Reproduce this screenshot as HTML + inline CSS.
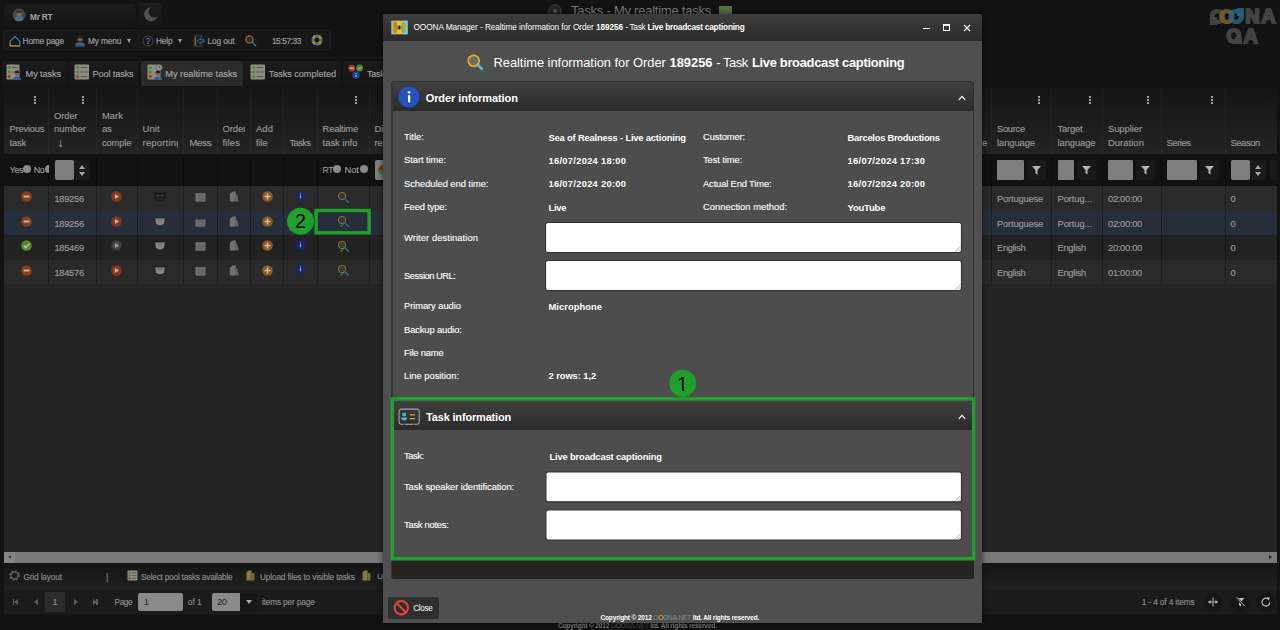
<!DOCTYPE html>
<html lang="en">
<head>
<meta charset="utf-8">
<title>OOONA Manager - Realtime information</title>
<style>
html,body{margin:0;padding:0}
body{width:1280px;height:630px;overflow:hidden;position:relative;background:#121212;font-family:"Liberation Sans",sans-serif;font-size:9px;color:#8f8f8f}
.a{position:absolute;white-space:nowrap}
.t{position:absolute;white-space:nowrap;line-height:12px;height:12px}
.b{font-weight:bold}
.lg{font-weight:bold;line-height:22px;font-family:"Liberation Sans",sans-serif}
#userbox{left:4px;top:4px;width:132px;height:22px;background:linear-gradient(#1c1c1c,#141414);border-radius:5px}
#moonbox{left:139px;top:3px;width:23px;height:22px;background:linear-gradient(#1c1c1c,#161616);border-radius:3px}
#menubar{left:3px;top:30px;width:328px;height:20px;background:#171717;box-shadow:inset 0 0 0 1px #1f1f1f;border-radius:2px}
.m{font-size:8.300px;color:#9c9c9c;top:35px;-webkit-text-stroke:.2px #9c9c9c}
.tab{top:61px;height:24.500px;background:linear-gradient(#1b1b1b,#151515);border-radius:2px}
.tab.sel{background:linear-gradient(#2c2c2c,#292929)}
.tt{font-size:9.250px;color:#9c9c9c;top:67.500px;-webkit-text-stroke:.2px #9c9c9c}
#ghead{left:4px;top:87px;width:1273px;height:67px;background:linear-gradient(#141414,#232323)}
#gfilt{left:4px;top:154px;width:1273px;height:32px;background:#111111}
.row{left:4px;width:1273px;height:24.600px}
.sep{top:87px;width:1px;height:198px;background:rgba(255,255,255,0.035)}
.gh{color:#9a9a9a;font-size:9.400px;-webkit-text-stroke:.15px #9a9a9a}
.gc{color:#9a9a9a;font-size:9.400px;-webkit-text-stroke:.15px #9a9a9a}
.dots{width:2px;height:2px;background:#a0a0a0;box-shadow:0 3px 0 #a0a0a0,0 -3px 0 #a0a0a0;top:99px}
.fin{background:#7f7f7f;top:160px;height:20px;border-radius:1px}
.fbtn{background:#191919;top:160px;height:20px;width:19px;border-radius:2px}
.rad{width:8px;height:8px;border-radius:50%;background:#8a8a8a;top:165px}
.bt{font-size:8.300px;color:#8c8c8c;-webkit-text-stroke:.15px #8c8c8c}
#dlg{left:383px;top:14px;width:599px;height:609px;background:#4f4f4f;border-radius:3px 3px 0 0;box-shadow:0 0 6px rgba(0,0,0,.6)}
#dtitle{left:0;top:0;width:599px;height:27px;background:linear-gradient(#3d3d3d,#2b2b2b);border-radius:3px 3px 0 0}
.ph{background:linear-gradient(#404040,#2a2a2a)}
.lbl{color:#fff;font-size:9.400px;-webkit-text-stroke:.12px #fff}
.val{color:#fff;font-size:9.400px;font-weight:bold}
.ta{background:#fff;border:1px solid #2b2b2b;border-radius:2.500px;box-sizing:border-box}
.green{border:3.400px solid #1fa02d;box-sizing:border-box}
.gcirc{width:26px;height:26px;border-radius:50%;background:#1fa02d;color:#000;font-size:18px;line-height:26px;text-align:center}
</style>
</head>
<body>
<!-- background page (dimmed by modal overlay) -->
<div class="a" id="userbox"></div><div class="a" id="moonbox"></div><div class="a" id="menubar"></div>
<svg class="a" style="left:12px;top:8px" width="14" height="14" viewBox="0 0 14 14"><circle cx="7" cy="7" r="6.500" fill="#484848"/><circle cx="7" cy="6.200" r="2.600" fill="#7d6a4a"/><path d="M2.500 11.500a4.500 3.600 0 0 1 9 0a6.500 6.500 0 0 1-9 0z" fill="#3f6f8a"/><rect x="4.300" y="3.200" width="5.400" height="1.600" fill="#2a2a2a"/></svg>
<div class="t b" style="left:30px;top:11px;color:#a5a5a5;font-size:8.3px;letter-spacing:-0.223px">Mr RT</div>
<svg class="a" style="left:143px;top:6px" width="16" height="16" viewBox="0 0 16 16"><path d="M8.200 1.200a7 7 0 1 0 6.600 9.300a5.600 5.600 0 0 1-6.600-9.300z" fill="#505050"/></svg>
<svg class="a" style="left:9px;top:35px" width="12" height="12" viewBox="0 0 12 12"><path d="M1.200 6.200L6 1.400l4.800 4.800v4.600H1.200z" fill="none" stroke="#3f6f9a" stroke-width="1.400"/><path d="M1.200 8.200v2.600h9.600" fill="none" stroke="#9a7d1e" stroke-width="1.500"/></svg>
<div class="t m" style="left:22.6px;font-size:8.3px;letter-spacing:-0.167px">Home page</div>
<svg class="a" style="left:74px;top:35px" width="12" height="12" viewBox="0 0 12 12"><circle cx="6" cy="4" r="2.500" fill="#8a5e3c"/><path d="M3.400 3.600a2.600 2.600 0 0 1 5.200 0z" fill="#222"/><path d="M1 11.500a5 4.600 0 0 1 10 0z" fill="#2f5f8f"/></svg>
<div class="t m" style="left:88px;font-size:8.3px;letter-spacing:-0.132px">My menu</div>
<div class="a" style="left:127px;top:39.300px;border-left:2.800px solid transparent;border-right:2.800px solid transparent;border-top:4.400px solid #a0a0a0"></div>
<svg class="a" style="left:142px;top:35px" width="12" height="12" viewBox="0 0 12 12"><circle cx="6" cy="6" r="5" fill="none" stroke="#4a4a50" stroke-width=".9"/><text x="6" y="8.800" font-size="8.500" text-anchor="middle" fill="#4f7fb8" style="font-family:&quot;Liberation Sans&quot;,sans-serif">?</text><circle cx="6" cy="8.300" r=".7" fill="#b07a2a"/></svg>
<div class="t m" style="left:156px;font-size:8.3px;letter-spacing:-0.17px">Help</div>
<div class="a" style="left:178px;top:39.300px;border-left:2.800px solid transparent;border-right:2.800px solid transparent;border-top:4.400px solid #a0a0a0"></div>
<svg class="a" style="left:193px;top:35px" width="12" height="12" viewBox="0 0 12 12"><path d="M8.500 3V.8H1.300v10.400h7.200V9" fill="none" stroke="#4c4c4c" stroke-width=".9"/><path d="M2.600 1.500v9" stroke="#8a6a22" stroke-width="1.100"/><path d="M4.300 6l3.200-2.700v1.500h3.600v2.400H7.500v1.500z" fill="#1a1a1a" stroke="#3f78a8" stroke-width=".9"/></svg>
<div class="t m" style="left:207.4px;font-size:8.3px;letter-spacing:-0.098px">Log out</div>
<svg class="a" style="left:244px;top:34px" width="14" height="14" viewBox="0 0 14 14"><circle cx="5.400" cy="5.400" r="3.600" fill="#2a2a2a" stroke="#9a7a20" stroke-width="1.200"/><path d="M8.300 8.300l3.300 3.300" stroke="#35708f" stroke-width="1.600" stroke-linecap="round"/></svg>
<div class="t m" style="left:271.9px;font-size:8.3px;letter-spacing:-0.4px">15:57:33</div>
<svg class="a" style="left:311px;top:34px" width="12" height="12" viewBox="0 0 12 12"><circle cx="6" cy="6" r="4" fill="none" stroke="#3f6f9a" stroke-width="3"/><circle cx="6" cy="6" r="4" fill="none" stroke="#a8851c" stroke-width="3" stroke-dasharray="3.140 3.140" transform="rotate(20 6 6)"/></svg>
<div class="a tab" style="left:2px;width:65px"></div>
<div class="a tab" style="left:68px;width:71px"></div>
<div class="a tab sel" style="left:141px;width:102px"></div>
<div class="a tab" style="left:244px;width:97px"></div>
<div class="a tab" style="left:343px;width:45px"></div>
<svg class="a" style="left:6px;top:63.500px" width="16" height="16" viewBox="0 0 16 16"><rect x=".5" y=".5" width="13" height="15" rx="1" fill="#8d8d85"/><circle cx="3.300" cy="3.500" r="1.600" fill="#4f8a2a"/><circle cx="3.300" cy="8" r="1.600" fill="#4f8a2a"/><circle cx="3.300" cy="12.500" r="1.600" fill="#a63a1e"/><path d="M6 3.500h6M6 8h3" stroke="#555" stroke-width="1"/><circle cx="11" cy="9.600" r="2.400" fill="#8a5e3c"/><path d="M8.600 9a2.400 2.400 0 0 1 4.800 0z" fill="#222"/><path d="M7 16a4 3.600 0 0 1 8 0z" fill="#2f5f9f"/></svg>
<div class="t tt" style="left:25.6px;font-size:9.25px;letter-spacing:-0.138px">My tasks</div>
<svg class="a" style="left:74px;top:63.500px" width="16" height="16" viewBox="0 0 16 16"><rect x=".5" y=".5" width="14.500" height="15" rx="1" fill="#8d8d85"/><circle cx="3.500" cy="3.500" r="1.600" fill="#4f8a2a"/><circle cx="3.500" cy="8" r="1.600" fill="#4f8a2a"/><circle cx="3.500" cy="12.500" r="1.600" fill="#a63a1e"/><path d="M6.500 3.500h7M6.500 8h7M6.500 12.500h7" stroke="#555" stroke-width="1"/></svg>
<div class="t tt" style="left:92.6px;font-size:9.25px;letter-spacing:-0.169px">Pool tasks</div>
<svg class="a" style="left:146.500px;top:63.500px" width="16" height="16" viewBox="0 0 16 16"><rect x=".5" y=".5" width="13" height="15" rx="1" fill="#8d8d85"/><circle cx="3.300" cy="3.500" r="1.600" fill="#4f8a2a"/><circle cx="3.300" cy="8" r="1.600" fill="#4f8a2a"/><circle cx="3.300" cy="12.500" r="1.600" fill="#a63a1e"/><circle cx="12" cy="3.600" r="3.200" fill="#999" stroke="#555" stroke-width=".7"/><path d="M12 1.800v1.900h1.500" stroke="#333" stroke-width=".7" fill="none"/><circle cx="11" cy="9.600" r="2.400" fill="#8a5e3c"/><path d="M8.600 9a2.400 2.400 0 0 1 4.800 0z" fill="#222"/><path d="M7 16a4 3.600 0 0 1 8 0z" fill="#2f5f9f"/></svg>
<div class="t tt" style="left:165.2px;color:#a4a4a4;font-size:9.25px;letter-spacing:0.002px">My realtime tasks</div>
<svg class="a" style="left:250px;top:63.500px" width="16" height="16" viewBox="0 0 16 16"><rect x=".5" y=".5" width="14.500" height="15" rx="1" fill="#8d8d85"/><circle cx="3.500" cy="3.500" r="1.600" fill="#4f8a2a"/><circle cx="3.500" cy="8" r="1.600" fill="#4f8a2a"/><circle cx="3.500" cy="12.500" r="1.600" fill="#4f8a2a"/><path d="M6.500 3.500h7M6.500 8h7M6.500 12.500h7" stroke="#555" stroke-width="1"/></svg>
<div class="t tt" style="left:268.7px;font-size:9.25px;letter-spacing:-0.107px">Tasks completed</div>
<svg class="a" style="left:348px;top:63.500px" width="17" height="16" viewBox="0 0 17 16"><circle cx="3.800" cy="4.200" r="3.400" fill="#a63a1e"/><rect x="1.800" y="3.500" width="4" height="1.400" fill="#bbb"/><circle cx="11.600" cy="4" r="3.400" fill="#4f8a2a"/><path d="M10 4l1.200 1.300L13.400 2.800" stroke="#bbb" stroke-width="1" fill="none"/><circle cx="8" cy="11" r="3.800" fill="#1f3f9f"/><rect x="7.500" y="9" width="1" height="1" fill="#ccc"/><rect x="7.500" y="10.600" width="1" height="2.600" fill="#ccc"/></svg>
<div class="t tt" style="left:367px;font-size:9.25px;letter-spacing:-0.331px">Tasks</div>
<svg class="a" style="left:548px;top:4px" width="14" height="14" viewBox="0 0 14 14"><circle cx="7" cy="7" r="6.200" fill="#222" stroke="#444" stroke-width="1"/><circle cx="7" cy="7" r="2" fill="#555"/></svg>
<div id="ptitle" class="a" style="left:571px;top:2.300px;line-height:18px;color:#7d7d7d;font-size:13px;letter-spacing:-0.237px">Tasks - My realtime tasks</div>
<svg class="a" style="left:719px;top:6px" width="13" height="8" viewBox="0 0 13 8"><rect width="13" height="8" fill="#5d6a50"/><rect x="1" y="1" width="4" height="6" fill="#467a28"/></svg>
<span class="a lg" style="left:1210.1px;top:5.7px;color:#434343;-webkit-text-stroke:2.2px #434343;font-size:18.8px;opacity:1">O</span>
<span class="a lg" style="left:1219.6px;top:5.7px;color:#7d6120;-webkit-text-stroke:2.2px #7d6120;font-size:18.8px;opacity:0.85">O</span>
<span class="a lg" style="left:1228.9px;top:5.7px;color:#2a6482;-webkit-text-stroke:2.2px #2a6482;font-size:18.8px;opacity:0.85">O</span>
<span class="a lg" style="left:1245.2px;top:4.9px;color:#434343;-webkit-text-stroke:2px #434343;font-size:20px;opacity:1">N</span>
<span class="a lg" style="left:1261.3px;top:4.9px;color:#434343;-webkit-text-stroke:2px #434343;font-size:20px;opacity:1">A</span>
<span class="a lg" style="left:1226.6px;top:25.4px;color:#434343;-webkit-text-stroke:2.2px #434343;font-size:18.8px;opacity:1">Q</span>
<span class="a lg" style="left:1243.4px;top:24.6px;color:#434343;-webkit-text-stroke:2px #434343;font-size:20px;opacity:1">A</span>
<div class="a" style="left:1210px;top:17px;width:7px;height:7.600px;background:#434343"></div><div class="a" style="left:1237px;top:8.300px;width:7px;height:8px;background:#2a6482;opacity:.85"></div><div class="a" style="left:1235px;top:36.500px;width:7px;height:7.500px;background:#434343"></div><div class="a" style="left:1224px;top:44.200px;width:22px;height:6px;background:#121212"></div>
<!-- grid -->
<div class="a" id="ghead"></div><div class="a" id="gfilt"></div>
<div class="a row" style="top:186px;background:#2a2a2a"></div>
<div class="a row" style="top:210.6px;background:#262d3b"></div>
<div class="a row" style="top:235.2px;background:#222222"></div>
<div class="a row" style="top:259.8px;background:#2a2a2a"></div>
<div class="a" style="left:4px;top:284.400px;width:1273px;height:267.600px;background:#242424"></div>
<div class="a sep" style="left:48px;height:67px"></div><div class="a sep" style="left:48px;top:154px;height:131px;background:rgba(0,0,0,.32)"></div>
<div class="a sep" style="left:96px;height:67px"></div><div class="a sep" style="left:96px;top:154px;height:131px;background:rgba(0,0,0,.32)"></div>
<div class="a sep" style="left:137px;height:67px"></div><div class="a sep" style="left:137px;top:154px;height:131px;background:rgba(0,0,0,.32)"></div>
<div class="a sep" style="left:183px;height:67px"></div><div class="a sep" style="left:183px;top:154px;height:131px;background:rgba(0,0,0,.32)"></div>
<div class="a sep" style="left:217px;height:67px"></div><div class="a sep" style="left:217px;top:154px;height:131px;background:rgba(0,0,0,.32)"></div>
<div class="a sep" style="left:250px;height:67px"></div><div class="a sep" style="left:250px;top:154px;height:131px;background:rgba(0,0,0,.32)"></div>
<div class="a sep" style="left:283px;height:67px"></div><div class="a sep" style="left:283px;top:154px;height:131px;background:rgba(0,0,0,.32)"></div>
<div class="a sep" style="left:317px;height:67px"></div><div class="a sep" style="left:317px;top:154px;height:131px;background:rgba(0,0,0,.32)"></div>
<div class="a sep" style="left:369px;height:67px"></div><div class="a sep" style="left:369px;top:154px;height:131px;background:rgba(0,0,0,.32)"></div>
<div class="a sep" style="left:991px;height:67px"></div><div class="a sep" style="left:991px;top:154px;height:131px;background:rgba(0,0,0,.32)"></div>
<div class="a sep" style="left:1051px;height:67px"></div><div class="a sep" style="left:1051px;top:154px;height:131px;background:rgba(0,0,0,.32)"></div>
<div class="a sep" style="left:1102px;height:67px"></div><div class="a sep" style="left:1102px;top:154px;height:131px;background:rgba(0,0,0,.32)"></div>
<div class="a sep" style="left:1161px;height:67px"></div><div class="a sep" style="left:1161px;top:154px;height:131px;background:rgba(0,0,0,.32)"></div>
<div class="a sep" style="left:1225px;height:67px"></div><div class="a sep" style="left:1225px;top:154px;height:131px;background:rgba(0,0,0,.32)"></div>
<div class="t gh" style="left:9.6px;top:122.6px;font-size:9.4px;letter-spacing:-0.236px">Previous</div><div class="t gh" style="left:9.6px;top:136.8px;font-size:9.4px;letter-spacing:-0.201px">task</div>
<div class="t gh" style="left:54px;top:110.0px;font-size:9.4px;letter-spacing:-0.074px">Order</div><div class="t gh" style="left:54px;top:122.6px;font-size:9.4px;letter-spacing:0.034px">number</div><div class="t gh" style="left:54px;top:136.8px;"><span style="font-size:12px;padding-left:3.200px">&#8595;</span></div>
<div class="t gh" style="left:102px;top:110.0px;width:29.5px;overflow:hidden;font-size:9.4px;letter-spacing:0.039px">Mark</div><div class="t gh" style="left:102px;top:122.6px;width:29.5px;overflow:hidden;font-size:9.4px;letter-spacing:-0.203px">as</div><div class="t gh" style="left:102px;top:136.8px;width:29.5px;overflow:hidden;font-size:9.4px;letter-spacing:-0.141px">completed</div>
<div class="t gh" style="left:142.6px;top:122.6px;width:35.5px;overflow:hidden;font-size:9.4px;letter-spacing:0.082px">Unit</div><div class="t gh" style="left:142.6px;top:136.8px;width:35.5px;overflow:hidden;font-size:9.4px;letter-spacing:0.22px">reporting</div>
<div class="t gh" style="left:189.4px;top:136.8px;width:22.5px;overflow:hidden;font-size:9.4px;letter-spacing:-0.217px">Messages</div>
<div class="t gh" style="left:222.5px;top:122.6px;width:22.7px;overflow:hidden;font-size:9.4px;letter-spacing:-0.074px">Order</div><div class="t gh" style="left:222.5px;top:136.8px;width:22.7px;overflow:hidden;font-size:9.4px;letter-spacing:0.166px">files</div>
<div class="t gh" style="left:256px;top:122.6px;font-size:9.4px;letter-spacing:0.104px">Add</div><div class="t gh" style="left:256px;top:136.8px;font-size:9.4px;letter-spacing:-0.096px">file</div>
<div class="t gh" style="left:289.4px;top:136.8px;font-size:9.2px;letter-spacing:-0.452px">Tasks</div>
<div class="t gh" style="left:322.6px;top:122.6px;font-size:9.4px;letter-spacing:-0.2px">Realtime</div><div class="t gh" style="left:322.6px;top:136.8px;font-size:9.4px;letter-spacing:-0.014px">task info</div>
<div class="t gh" style="left:374.4px;top:122.6px;width:9px;overflow:hidden;">Disc</div><div class="t gh" style="left:374.4px;top:136.8px;width:9px;overflow:hidden;">repo</div>
<div class="t gh" style="left:982px;top:136.8px;">e</div>
<div class="t gh" style="left:997px;top:122.6px;font-size:9.4px;letter-spacing:-0.32px">Source</div><div class="t gh" style="left:997px;top:136.8px;font-size:9.4px;letter-spacing:-0.074px">language</div>
<div class="t gh" style="left:1057.5px;top:122.6px;font-size:9.4px;letter-spacing:-0.194px">Target</div><div class="t gh" style="left:1057.5px;top:136.8px;font-size:9.4px;letter-spacing:-0.074px">language</div>
<div class="t gh" style="left:1108px;top:122.6px;font-size:9.4px;letter-spacing:-0.051px">Supplier</div><div class="t gh" style="left:1108px;top:136.8px;font-size:9.4px;letter-spacing:0.058px">Duration</div>
<div class="t gh" style="left:1166.5px;top:136.8px;font-size:9.4px;letter-spacing:-0.413px">Series</div>
<div class="t gh" style="left:1230.5px;top:136.8px;font-size:9.4px;letter-spacing:-0.433px">Season</div>
<div class="a dots" style="left:33.9px"></div>
<div class="a dots" style="left:82.3px"></div>
<div class="a dots" style="left:354.8px"></div>
<div class="a dots" style="left:1037.5px"></div>
<div class="a dots" style="left:1088.5px"></div>
<div class="a dots" style="left:1146.5px"></div>
<div class="a dots" style="left:1210.5px"></div>
<div class="t gc" style="left:9.6px;top:163.5px;font-size:9.13px;letter-spacing:-0.452px">Yes</div><div class="a rad" style="left:23.300px"></div><div class="t gc" style="left:33.8px;top:163.5px;font-size:8.94px;letter-spacing:-0.449px">No</div><div class="a rad" style="left:44.500px;width:4px;border-radius:4px 0 0 4px"></div>
<div class="a fin" style="left:54.600px;width:19px;border-radius:2px"></div><div class="a" style="left:73.600px;top:160px;width:16.500px;height:20px;background:#1a1a1a;border-radius:0 2px 2px 0"></div>
<div class="a" style="left:79px;top:164.500px;border-left:3px solid transparent;border-right:3px solid transparent;border-bottom:4px solid #aaa"></div><div class="a" style="left:79px;top:172px;border-left:3px solid transparent;border-right:3px solid transparent;border-top:4px solid #aaa"></div>
<div class="t gc" style="left:322.6px;top:163.5px;font-size:8.69px;letter-spacing:-0.448px">RT</div><div class="a rad" style="left:333px"></div><div class="t gc" style="left:344.4px;top:163.5px;font-size:9.4px;letter-spacing:-0.031px">Not</div><div class="a rad" style="left:360px"></div>
<div class="a" style="left:375px;top:160px;width:8px;height:20px;background:#7f7f7f;border-radius:2px 0 0 2px"></div><div class="a" style="left:378px;top:165px;width:5px;height:5px;background:#8f3526;border-radius:5px 0 0 0"></div><div class="a" style="left:378px;top:170px;width:5px;height:5px;background:#447a26;border-radius:0 0 0 5px"></div>
<div class="a fin" style="left:997px;width:26.5px"></div><div class="a fbtn" style="left:1026.5px"></div><svg class="a" style="left:1026.5px;top:161px" width="19" height="18" viewBox="0 0 19 18"><path d="M5 5h9l-3.500 4v4.500l-2-1.200V9z" fill="#b8b8b8"/></svg>
<div class="a fin" style="left:1057.5px;width:16px"></div><div class="a fbtn" style="left:1077px"></div><svg class="a" style="left:1077px;top:161px" width="19" height="18" viewBox="0 0 19 18"><path d="M5 5h9l-3.500 4v4.500l-2-1.200V9z" fill="#b8b8b8"/></svg>
<div class="a fin" style="left:1108px;width:24.5px"></div><div class="a fbtn" style="left:1136px"></div><svg class="a" style="left:1136px;top:161px" width="19" height="18" viewBox="0 0 19 18"><path d="M5 5h9l-3.500 4v4.500l-2-1.200V9z" fill="#b8b8b8"/></svg>
<div class="a fin" style="left:1167px;width:29.5px"></div><div class="a fbtn" style="left:1200px"></div><svg class="a" style="left:1200px;top:161px" width="19" height="18" viewBox="0 0 19 18"><path d="M5 5h9l-3.500 4v4.500l-2-1.200V9z" fill="#b8b8b8"/></svg>
<div class="a fin" style="left:1231px;width:18.500px;border-radius:2px"></div><div class="a" style="left:1249.500px;top:160px;width:16.500px;height:20px;background:#1a1a1a;border-radius:0 2px 2px 0"></div>
<div class="a" style="left:1255px;top:164.500px;border-left:3px solid transparent;border-right:3px solid transparent;border-bottom:4px solid #aaa"></div><div class="a" style="left:1255px;top:172px;border-left:3px solid transparent;border-right:3px solid transparent;border-top:4px solid #aaa"></div>
<div class="a fbtn" style="left:1270px;width:7px;border-radius:2px 0 0 2px"></div>
<svg class="a" style="left:20.5px;top:191.1px" width="11" height="11" viewBox="0 0 11 11"><circle cx="5.500" cy="5.500" r="5.300" fill="#8f3c19"/><rect x="2.500" y="4.500" width="6" height="2" rx=".5" fill="#b8b8b8"/></svg>
<div class="t gc" style="left:54.4px;top:192.9px;font-size:9.4px;letter-spacing:-0.316px">189256</div>
<svg class="a" style="left:111px;top:191.1px" width="11" height="11" viewBox="0 0 11 11"><circle cx="5.500" cy="5.500" r="5.300" fill="#8a3518"/><path d="M3.900 3l4.400 2.500-4.400 2.500z" fill="#b8b8b8"/></svg>
<svg class="a" style="left:154.3px;top:191.1px" width="12" height="11" viewBox="0 0 12 11"><path d="M1 1.300l1.600.7h6.800l1.600-.7v4.200a5 4.400 0 0 1-10 0z" fill="#242424" stroke="#141414" stroke-width=".8"/><path d="M3.700 4.600h1.600M6.700 4.600h1.600" stroke="#5a5a5a" stroke-width=".9"/></svg>
<svg class="a" style="left:195.3px;top:193.0px" width="11" height="9" viewBox="0 0 11 9"><rect x=".5" y=".3" width="10" height="8.400" rx="1" fill="#6e6e6e"/><rect x=".5" y=".3" width="10" height="1.200" fill="#6e6e6e"/><path d="M1.500 3.200h9M1.500 5h9M1.500 6.800h9" stroke="#5c5c5c" stroke-width=".6"/><path d="M1.800 1.500v7" stroke="#888" stroke-width=".6"/></svg>
<svg class="a" style="left:228.5px;top:191.1px" width="10" height="11" viewBox="0 0 10 11"><path d="M.8 3l3-2.500h3v10h-6z" fill="#707070"/><path d="M6.800 3.500h1.400l1.300 6v1H6.800z" fill="#666"/><path d="M3 1v9.500" stroke="#7c7c7c" stroke-width=".6"/></svg>
<svg class="a" style="left:261.5px;top:191.1px" width="11" height="11" viewBox="0 0 11 11"><circle cx="5.500" cy="5.500" r="5.300" fill="#8f5a1c"/><path d="M5.500 2.600v5.800M2.600 5.500h5.800" stroke="#c0c0c0" stroke-width="1.500"/></svg>
<svg class="a" style="left:295px;top:190.5px" width="12" height="12" viewBox="0 0 12 12"><ellipse cx="5.500" cy="5" rx="5.200" ry="4.600" fill="#13286b"/><path d="M6 8.500l3.300 3-.3-4.500z" fill="#13286b"/><rect x="5" y="2.200" width="1.100" height="1.100" fill="#a8a8a8"/><rect x="5" y="4" width="1.100" height="3.400" fill="#a8a8a8"/></svg>
<svg class="a" style="left:337px;top:190.5px" width="13" height="13" viewBox="0 0 13 13"><circle cx="5" cy="5" r="3.700" fill="#383838" stroke="#8f7228" stroke-width="1"/><path d="M8 8l3.300 3.200" stroke="#2a6f8a" stroke-width="1.600" stroke-linecap="round"/></svg>
<div class="t gc" style="left:997px;top:192.9px;font-size:9.4px;letter-spacing:-0.195px">Portuguese</div>
<div class="t gc" style="left:1057.5px;top:192.9px;font-size:9.4px;letter-spacing:-0.104px">Portug...</div>
<div class="t gc" style="left:1108px;top:192.9px;font-size:9.4px;letter-spacing:-0.312px">02:00:00</div>
<div class="t gc" style="left:1230.5px;top:192.9px;">0</div>
<svg class="a" style="left:20.5px;top:215.7px" width="11" height="11" viewBox="0 0 11 11"><circle cx="5.500" cy="5.500" r="5.300" fill="#8f3c19"/><rect x="2.500" y="4.500" width="6" height="2" rx=".5" fill="#b8b8b8"/></svg>
<div class="t gc" style="left:54.4px;top:217.5px;font-size:9.4px;letter-spacing:-0.316px">189256</div>
<svg class="a" style="left:111px;top:215.7px" width="11" height="11" viewBox="0 0 11 11"><circle cx="5.500" cy="5.500" r="5.300" fill="#8a3518"/><path d="M3.900 3l4.400 2.500-4.400 2.500z" fill="#b8b8b8"/></svg>
<svg class="a" style="left:154.3px;top:215.7px" width="12" height="11" viewBox="0 0 12 11"><path d="M1 1.300l1.600.7h6.800l1.600-.7v4.200a5 4.400 0 0 1-10 0z" fill="#858585" stroke="#141414" stroke-width=".8"/><path d="M3.700 4.600h1.600M6.700 4.600h1.600" stroke="#5a5a5a" stroke-width=".9"/></svg>
<svg class="a" style="left:195.3px;top:217.6px" width="11" height="9" viewBox="0 0 11 9"><rect x=".5" y=".3" width="10" height="8.400" rx="1" fill="#6e6e6e"/><rect x=".5" y=".3" width="10" height="1.200" fill="#1a1a1a"/><path d="M1.500 3.200h9M1.500 5h9M1.500 6.800h9" stroke="#5c5c5c" stroke-width=".6"/><path d="M1.800 1.500v7" stroke="#888" stroke-width=".6"/></svg>
<svg class="a" style="left:228.5px;top:215.7px" width="10" height="11" viewBox="0 0 10 11"><path d="M.8 3l3-2.500h3v10h-6z" fill="#707070"/><path d="M6.800 3.500h1.400l1.300 6v1H6.800z" fill="#666"/><path d="M3 1v9.500" stroke="#7c7c7c" stroke-width=".6"/></svg>
<svg class="a" style="left:261.5px;top:215.7px" width="11" height="11" viewBox="0 0 11 11"><circle cx="5.500" cy="5.500" r="5.300" fill="#8f5a1c"/><path d="M5.500 2.600v5.800M2.600 5.500h5.800" stroke="#c0c0c0" stroke-width="1.500"/></svg>
<svg class="a" style="left:337px;top:215.1px" width="13" height="13" viewBox="0 0 13 13"><circle cx="5" cy="5" r="3.700" fill="#383838" stroke="#8f7228" stroke-width="1"/><path d="M8 8l3.300 3.200" stroke="#2a6f8a" stroke-width="1.600" stroke-linecap="round"/><path d="M3.200 9.800l1.300 1.300 2.200-2.400" stroke="#3a7a28" stroke-width="1.100" fill="none"/></svg>
<div class="t gc" style="left:997px;top:217.5px;font-size:9.4px;letter-spacing:-0.195px">Portuguese</div>
<div class="t gc" style="left:1057.5px;top:217.5px;font-size:9.4px;letter-spacing:-0.104px">Portug...</div>
<div class="t gc" style="left:1108px;top:217.5px;font-size:9.4px;letter-spacing:-0.312px">02:00:00</div>
<div class="t gc" style="left:1230.5px;top:217.5px;">0</div>
<svg class="a" style="left:20.5px;top:240.29999999999998px" width="11" height="11" viewBox="0 0 11 11"><circle cx="5.500" cy="5.500" r="5.300" fill="#5a8528"/><path d="M2.800 5.600l1.900 2 3.600-4" stroke="#c4c4c4" stroke-width="1.400" fill="none"/></svg>
<div class="t gc" style="left:54.4px;top:242.1px;font-size:9.4px;letter-spacing:-0.316px">185469</div>
<svg class="a" style="left:111px;top:240.29999999999998px" width="11" height="11" viewBox="0 0 11 11"><circle cx="5.500" cy="5.500" r="5" fill="#444" stroke="#333" stroke-width=".6"/><path d="M3.900 3l4.400 2.500-4.400 2.500z" fill="#a0a0a0"/></svg>
<svg class="a" style="left:154.3px;top:240.29999999999998px" width="12" height="11" viewBox="0 0 12 11"><path d="M1 1.300l1.600.7h6.800l1.600-.7v4.200a5 4.400 0 0 1-10 0z" fill="#858585" stroke="#141414" stroke-width=".8"/><path d="M3.700 4.600h1.600M6.700 4.600h1.600" stroke="#5a5a5a" stroke-width=".9"/></svg>
<svg class="a" style="left:195.3px;top:242.2px" width="11" height="9" viewBox="0 0 11 9"><rect x=".5" y=".3" width="10" height="8.400" rx="1" fill="#6e6e6e"/><rect x=".5" y=".3" width="10" height="1.200" fill="#6e6e6e"/><path d="M1.500 3.200h9M1.500 5h9M1.500 6.800h9" stroke="#5c5c5c" stroke-width=".6"/><path d="M1.800 1.500v7" stroke="#888" stroke-width=".6"/></svg>
<svg class="a" style="left:228.5px;top:240.29999999999998px" width="10" height="11" viewBox="0 0 10 11"><path d="M.8 3l3-2.500h3v10h-6z" fill="#707070"/><path d="M6.800 3.500h1.400l1.300 6v1H6.800z" fill="#666"/><path d="M3 1v9.500" stroke="#7c7c7c" stroke-width=".6"/></svg>
<svg class="a" style="left:261.5px;top:240.29999999999998px" width="11" height="11" viewBox="0 0 11 11"><circle cx="5.500" cy="5.500" r="5.300" fill="#8f5a1c"/><path d="M5.500 2.600v5.800M2.600 5.500h5.800" stroke="#c0c0c0" stroke-width="1.500"/></svg>
<svg class="a" style="left:295px;top:239.7px" width="12" height="12" viewBox="0 0 12 12"><ellipse cx="5.500" cy="5" rx="5.200" ry="4.600" fill="#13286b"/><path d="M6 8.500l3.300 3-.3-4.500z" fill="#13286b"/><rect x="5" y="2.200" width="1.100" height="1.100" fill="#a8a8a8"/><rect x="5" y="4" width="1.100" height="3.400" fill="#a8a8a8"/></svg>
<svg class="a" style="left:337px;top:239.7px" width="13" height="13" viewBox="0 0 13 13"><circle cx="5" cy="5" r="3.700" fill="#383838" stroke="#8f7228" stroke-width="1"/><path d="M8 8l3.300 3.200" stroke="#2a6f8a" stroke-width="1.600" stroke-linecap="round"/><path d="M3.200 9.800l1.300 1.300 2.200-2.400" stroke="#3a7a28" stroke-width="1.100" fill="none"/></svg>
<div class="t gc" style="left:997px;top:242.1px;font-size:9.4px;letter-spacing:-0.321px">English</div>
<div class="t gc" style="left:1057.5px;top:242.1px;font-size:9.4px;letter-spacing:-0.321px">English</div>
<div class="t gc" style="left:1108px;top:242.1px;font-size:9.4px;letter-spacing:-0.312px">20:00:00</div>
<div class="t gc" style="left:1230.5px;top:242.1px;">0</div>
<svg class="a" style="left:20.5px;top:264.90000000000003px" width="11" height="11" viewBox="0 0 11 11"><circle cx="5.500" cy="5.500" r="5.300" fill="#8f3c19"/><rect x="2.500" y="4.500" width="6" height="2" rx=".5" fill="#b8b8b8"/></svg>
<div class="t gc" style="left:54.4px;top:266.7px;font-size:9.4px;letter-spacing:-0.316px">184576</div>
<svg class="a" style="left:111px;top:264.90000000000003px" width="11" height="11" viewBox="0 0 11 11"><circle cx="5.500" cy="5.500" r="5.300" fill="#8a3518"/><path d="M3.900 3l4.400 2.500-4.400 2.500z" fill="#b8b8b8"/></svg>
<svg class="a" style="left:154.3px;top:264.90000000000003px" width="12" height="11" viewBox="0 0 12 11"><path d="M1 1.300l1.600.7h6.800l1.600-.7v4.200a5 4.400 0 0 1-10 0z" fill="#858585" stroke="#141414" stroke-width=".8"/><path d="M3.700 4.600h1.600M6.700 4.600h1.600" stroke="#5a5a5a" stroke-width=".9"/></svg>
<svg class="a" style="left:195.3px;top:266.8px" width="11" height="9" viewBox="0 0 11 9"><rect x=".5" y=".3" width="10" height="8.400" rx="1" fill="#6e6e6e"/><rect x=".5" y=".3" width="10" height="1.200" fill="#6e6e6e"/><path d="M1.500 3.200h9M1.500 5h9M1.500 6.800h9" stroke="#5c5c5c" stroke-width=".6"/><path d="M1.800 1.500v7" stroke="#888" stroke-width=".6"/></svg>
<svg class="a" style="left:228.5px;top:264.90000000000003px" width="10" height="11" viewBox="0 0 10 11"><path d="M.8 3l3-2.500h3v10h-6z" fill="#707070"/><path d="M6.800 3.500h1.400l1.300 6v1H6.800z" fill="#666"/><path d="M3 1v9.500" stroke="#7c7c7c" stroke-width=".6"/></svg>
<svg class="a" style="left:261.5px;top:264.90000000000003px" width="11" height="11" viewBox="0 0 11 11"><circle cx="5.500" cy="5.500" r="5.300" fill="#8f5a1c"/><path d="M5.500 2.600v5.800M2.600 5.500h5.800" stroke="#c0c0c0" stroke-width="1.500"/></svg>
<svg class="a" style="left:295px;top:264.3px" width="12" height="12" viewBox="0 0 12 12"><ellipse cx="5.500" cy="5" rx="5.200" ry="4.600" fill="#13286b"/><path d="M6 8.500l3.300 3-.3-4.500z" fill="#13286b"/><rect x="5" y="2.200" width="1.100" height="1.100" fill="#a8a8a8"/><rect x="5" y="4" width="1.100" height="3.400" fill="#a8a8a8"/></svg>
<svg class="a" style="left:337px;top:264.3px" width="13" height="13" viewBox="0 0 13 13"><circle cx="5" cy="5" r="3.700" fill="#383838" stroke="#8f7228" stroke-width="1"/><path d="M8 8l3.300 3.200" stroke="#2a6f8a" stroke-width="1.600" stroke-linecap="round"/><path d="M3.200 9.800l1.300 1.300 2.200-2.400" stroke="#3a7a28" stroke-width="1.100" fill="none"/></svg>
<div class="t gc" style="left:997px;top:266.7px;font-size:9.4px;letter-spacing:-0.321px">English</div>
<div class="t gc" style="left:1057.5px;top:266.7px;font-size:9.4px;letter-spacing:-0.321px">English</div>
<div class="t gc" style="left:1108px;top:266.7px;font-size:9.4px;letter-spacing:-0.312px">01:00:00</div>
<div class="t gc" style="left:1230.5px;top:266.7px;">0</div>
<!-- bottom bars -->
<div class="a" style="left:4px;top:552px;width:1273px;height:11px;background:#797979"></div>
<div class="a" style="left:4px;top:552px;width:11px;height:11px;background:#858585"></div>
<div class="a" style="left:7.500px;top:555px;border-top:2.500px solid transparent;border-bottom:2.500px solid transparent;border-right:3.500px solid #444"></div>
<div class="a" style="left:1268.500px;top:555px;border-top:2.500px solid transparent;border-bottom:2.500px solid transparent;border-left:3.500px solid #222"></div>
<div class="a" style="left:4px;top:562.500px;width:1273px;height:27.500px;background:linear-gradient(#151515,#202020)"></div>
<svg class="a" style="left:8.500px;top:570px" width="11" height="11" viewBox="0 0 11 11"><circle cx="5.500" cy="5.500" r="3.600" fill="none" stroke="#6a6a6a" stroke-width="1.200"/><circle cx="5.500" cy="5.500" r="4.700" fill="none" stroke="#6a6a6a" stroke-width="1.300" stroke-dasharray="1.600 2.090"/></svg>
<div class="t bt" style="left:23.4px;top:571px;font-size:8.3px;letter-spacing:-0.148px">Grid layout</div>
<div class="t bt" style="left:106px;top:571px;">|</div>
<svg class="a" style="left:126.500px;top:569.500px" width="11" height="11" viewBox="0 0 11 11"><rect x=".5" y=".5" width="10" height="10" rx="1" fill="#8d8d85"/><circle cx="2.600" cy="2.800" r="1.100" fill="#4f8a2a"/><circle cx="2.600" cy="5.600" r="1.100" fill="#4f8a2a"/><circle cx="2.600" cy="8.400" r="1.100" fill="#a63a1e"/><path d="M4.600 2.800h5M4.600 5.600h5M4.600 8.400h5" stroke="#555" stroke-width=".8"/></svg>
<div class="t bt" style="left:141px;top:571px;font-size:8.3px;letter-spacing:-0.233px">Select pool tasks available</div>
<svg class="a" style="left:245.5px;top:569.500px" width="9" height="11" viewBox="0 0 9 11"><path d="M.5 2.500l2-2h3v10h-5z" fill="#8a7a3f"/><path d="M5.500 3h3v7.500h-3z" fill="#7a6a35"/></svg>
<div class="t bt" style="left:260px;top:571px;font-size:8.3px;letter-spacing:-0.169px">Upload files to visible tasks</div>
<svg class="a" style="left:362.3px;top:569.500px" width="9" height="11" viewBox="0 0 9 11"><path d="M.5 2.500l2-2h3v10h-5z" fill="#8a7a3f"/><path d="M5.500 3h3v7.500h-3z" fill="#7a6a35"/></svg>
<div class="t bt" style="left:377.2px;top:571px;font-size:7.8px;letter-spacing:-0.452px">Upload</div>
<div class="a" style="left:4px;top:590px;width:1273px;height:24px;background:#1b1b1b"></div>
<div class="a" style="left:12.500px;top:599px;width:1.500px;height:6px;background:#5c5c5c"></div><div class="a" style="left:14px;top:599px;border-top:3px solid transparent;border-bottom:3px solid transparent;border-right:4px solid #5c5c5c"></div>
<div class="a" style="left:33.500px;top:599px;border-top:3px solid transparent;border-bottom:3px solid transparent;border-right:4px solid #5c5c5c"></div>
<div class="a" style="left:45.300px;top:592px;width:19.700px;height:20px;background:#2c2c2c"></div><div class="t bt" style="left:45.300px;width:19.700px;text-align:center;top:596px;font-size:9.200px">1</div>
<div class="a" style="left:73.500px;top:599px;border-top:3px solid transparent;border-bottom:3px solid transparent;border-left:4px solid #5c5c5c"></div>
<div class="a" style="left:92.500px;top:599px;border-top:3px solid transparent;border-bottom:3px solid transparent;border-left:4px solid #5c5c5c"></div><div class="a" style="left:96px;top:599px;width:1.500px;height:6px;background:#5c5c5c"></div>
<div class="t bt" style="left:114.6px;top:596.3px;font-size:8.3px;letter-spacing:-0.448px">Page</div>
<div class="a" style="left:137.500px;top:593px;width:45.300px;height:17.600px;background:#8a8a8a;border-radius:2px"></div><div class="t bt" style="left:143.7px;top:596px;font-size:9.400px;color:#262626;-webkit-text-stroke:0">1</div>
<div class="t bt" style="left:187.8px;top:596px;font-size:8.3px;letter-spacing:-0.036px">of 1</div>
<div class="a" style="left:211.500px;top:593px;width:45px;height:17.600px;background:#161616;border-radius:2px"></div><div class="a" style="left:211.500px;top:593px;width:28.500px;height:17.600px;background:#8a8a8a;border-radius:2px 0 0 2px"></div><div class="t bt" style="left:217px;top:596px;color:#262626;-webkit-text-stroke:0;font-size:9.4px;letter-spacing:-0.419px">20</div>
<div class="a" style="left:245.500px;top:600px;border-left:3px solid transparent;border-right:3px solid transparent;border-top:4px solid #aaa"></div>
<div class="t bt" style="left:261.9px;top:596px;font-size:8.3px;letter-spacing:-0.149px">items per page</div>
<div class="t bt" style="left:1141.7px;top:596px;font-size:8.3px;letter-spacing:-0.13px">1 - 4 of 4 items</div>
<div class="a" style="left:1203.5px;top:593px;width:18px;height:18px;border-radius:9px;background:#151515"></div>
<div class="a" style="left:1230.5px;top:593px;width:18px;height:18px;border-radius:9px;background:#151515"></div>
<div class="a" style="left:1257px;top:593px;width:18px;height:18px;border-radius:9px;background:#151515"></div>
<svg class="a" style="left:1206.500px;top:596px" width="12" height="12" viewBox="0 0 12 12"><path d="M6 1.500v9" stroke="#bbb" stroke-width="1"/><path d="M.8 6l2.800-2v4zM11.200 6l-2.800-2v4z" fill="#bbb"/><path d="M3 6h6" stroke="#bbb" stroke-width=".8"/></svg>
<svg class="a" style="left:1233.500px;top:596px" width="12" height="12" viewBox="0 0 12 12"><path d="M1.500 2h9l-3.500 4v4.500l-2-1.200V6z" fill="#bbb"/><path d="M2 1l8.500 9.500" stroke="#151515" stroke-width="2"/><path d="M2.500 1l8 9" stroke="#bbb" stroke-width=".9"/></svg>
<svg class="a" style="left:1260px;top:596px" width="12" height="12" viewBox="0 0 12 12"><path d="M9.800 6.200a3.900 3.900 0 1 1-1.700-3.300" fill="none" stroke="#bbb" stroke-width="1.200"/><path d="M6.800 1.200l3.200.4-1.400 2.800z" fill="#bbb"/></svg>
<div id="pcopy" class="a b" style="left:558px;top:620.500px;line-height:9px;color:#7a7a7a;font-size:6.5px;letter-spacing:-0.148px">Copyright © 2012 <span style="color:#454545;font-weight:normal">O<span style="color:#7a6422">O</span><span style="color:#2f6a8a">O</span>NA.NET</span> ltd. All rights reserved.</div>
<!-- annotations -->
<svg class="a" style="left:312px;top:206px" width="62" height="32" viewBox="0 0 62 32"><rect x="4.200" y="4.500" width="52.900" height="22.300" fill="none" stroke="#1fa02d" stroke-width="3.400"/></svg>
<svg class="a" style="left:285px;top:206px" width="30" height="30" viewBox="0 0 30 30"><circle cx="15.500" cy="15.300" r="13.500" fill="#1fa02d"/><text x="15.500" y="22.300" text-anchor="middle" style="font-family:&quot;Liberation Sans&quot;,sans-serif" font-size="19.500" fill="#000">2</text></svg>
<!-- dialog -->
<div class="a" id="dlg">
<div class="a" id="dtitle"></div>
<svg class="a" style="left:8px;top:5.5px" width="17" height="15" viewBox="0 0 17 15"><rect x=".2" y=".6" width="6" height="13.800" fill="#a9adb5"/><rect x="11" y=".6" width="5.800" height="13.800" fill="#6fcdfa"/><circle cx="8.400" cy="7.500" r="7" fill="#efc030"/><ellipse cx="4.400" cy="7.500" rx="2.300" ry="6" fill="#b58d1c"/><ellipse cx="12.500" cy="7.500" rx="2.600" ry="5.500" fill="#9fab48"/><ellipse cx="15.200" cy="7.500" rx=".8" ry="1.600" fill="#e6bd36"/><circle cx="8.300" cy="7.500" r="1.900" fill="#1d2430"/><path d="M6.500 7.500a1.900 1.900 0 0 1 .8-1.500v3a1.900 1.900 0 0 1-.8-1.500z" fill="#c8ccd4"/><path d="M10.200 7.500a1.900 1.900 0 0 0-.8-1.500v3a1.900 1.900 0 0 0 .8-1.500z" fill="#6fcdfa"/></svg>
<div class="t " style="left:30.5px;top:7px;color:#fff;font-size:8.3px;letter-spacing:-0.092px">OOONA Manager - Realtime information for Order</div>
<div class="t b" style="left:212.9px;top:7px;color:#fff;font-size:8.3px;letter-spacing:-0.098px">189256</div>
<div class="t " style="left:242.2px;top:7px;color:#fff;font-size:8.3px;letter-spacing:-0.297px">- Task</div>
<div class="t b" style="left:264.4px;top:7px;color:#fff;font-size:8.3px;letter-spacing:-0.229px">Live broadcast captioning</div>
<div class="a" style="left:540px;top:14.3px;width:7px;height:1.200px;background:#fff"></div>
<div class="a" style="left:560px;top:9.5px;width:7px;height:7px;box-sizing:border-box;border:1px solid #fff;border-top-width:2px"></div>
<svg class="a" style="left:579.5px;top:9.5px" width="8" height="8" viewBox="0 0 8 8"><path d="M1 1l6 6M7 1l-6 6" stroke="#fff" stroke-width="1.300"/></svg>
<svg class="a" style="left:83px;top:39px" width="19" height="19" viewBox="0 0 19 19"><path d="M12 12l4 4" stroke="#4fbdf0" stroke-width="2.600" stroke-linecap="round"/><circle cx="7.700" cy="7.800" r="5.500" fill="#6b6b6b" stroke="#e6b422" stroke-width="1.700"/></svg>
<div class="t " style="left:110.5px;top:39.6px;color:#fff;line-height:18px;height:18px;font-size:12.9px;letter-spacing:-0.036px">Realtime information for Order</div>
<div class="t b" style="left:286.5px;top:39.6px;color:#fff;line-height:18px;height:18px;font-size:12.9px;letter-spacing:-0.003px">189256</div>
<div class="t " style="left:333.3px;top:39.6px;color:#fff;line-height:18px;height:18px;font-size:12.9px;letter-spacing:-0.443px">- Task</div>
<div class="t b" style="left:368.9px;top:39.6px;color:#fff;line-height:18px;height:18px;font-size:12.9px;letter-spacing:-0.293px">Live broadcast captioning</div>
<div class="a" style="left:8px;top:67px;width:583px;height:498px;box-sizing:border-box;border:1px solid #2e2e2e;border-left:2px solid #363636;border-radius:3px;background:#4d4d4d"></div>
<div class="a ph" style="left:9.5px;top:68px;width:580.300px;height:28.500px;border-radius:2px 2px 0 0"></div>
<svg class="a" style="left:14.5px;top:72px" width="22" height="22" viewBox="0 0 22 22"><circle cx="11" cy="11" r="10.600" fill="#2552c2"/><circle cx="11.100" cy="6.300" r="1.350" fill="#fff"/><rect x="10" y="8.900" width="2.200" height="7.700" rx="1" fill="#fff"/></svg>
<div class="t b" style="left:42.7px;top:77.5px;color:#fff;font-size:11px;letter-spacing:-0.077px">Order information</div>
<svg class="a" style="left:574.5px;top:80.5px" width="8" height="6" viewBox="0 0 8 6"><path d="M.8 4.800L4 1.400l3.200 3.400" stroke="#fff" stroke-width="1.200" fill="none"/></svg>
<div class="t lbl" style="left:21px;top:117px;font-size:9.4px;letter-spacing:-0.045px">Title:</div>
<div class="t val" style="left:165.5px;top:117.5px;font-size:9.4px;letter-spacing:-0.187px">Sea of Realness - Live actioning</div>
<div class="t lbl" style="left:320px;top:117px;font-size:9.4px;letter-spacing:-0.139px">Customer:</div>
<div class="t val" style="left:464.6px;top:117.5px;font-size:9.4px;letter-spacing:-0.261px">Barcelos Broductions</div>
<div class="t lbl" style="left:21px;top:140px;font-size:9.4px;letter-spacing:-0.065px">Start time:</div>
<div class="t val" style="left:165.5px;top:140.5px;font-size:9.4px;letter-spacing:0.268px">16/07/2024 18:00</div>
<div class="t lbl" style="left:320px;top:140px;font-size:9.4px;letter-spacing:-0.092px">Test time:</div>
<div class="t val" style="left:464.6px;top:140.5px;font-size:9.4px;letter-spacing:0.262px">16/07/2024 17:30</div>
<div class="t lbl" style="left:21px;top:163.5px;font-size:9.4px;letter-spacing:-0.057px">Scheduled end time:</div>
<div class="t val" style="left:165.5px;top:164px;font-size:9.4px;letter-spacing:0.268px">16/07/2024 20:00</div>
<div class="t lbl" style="left:320px;top:163.5px;font-size:9.4px;letter-spacing:-0.155px">Actual End Time:</div>
<div class="t val" style="left:464.6px;top:164px;font-size:9.4px;letter-spacing:0.262px">16/07/2024 20:00</div>
<div class="t lbl" style="left:21px;top:186.5px;font-size:9.4px;letter-spacing:-0.151px">Feed type:</div>
<div class="t val" style="left:165.5px;top:187.5px;font-size:9.4px;letter-spacing:-0.266px">Live</div>
<div class="t lbl" style="left:320px;top:186.5px;font-size:9.4px;letter-spacing:0.015px">Connection method:</div>
<div class="t val" style="left:464.6px;top:187.5px;font-size:9.4px;letter-spacing:-0.16px">YouTube</div>
<div class="t lbl" style="left:21px;top:217.5px;font-size:9.4px;letter-spacing:0.068px">Writer destination</div>
<div class="t lbl" style="left:21px;top:255.5px;font-size:9.31px;letter-spacing:-0.448px">Session URL:</div>
<div class="t lbl" style="left:21px;top:286px;font-size:9.4px;letter-spacing:-0.08px">Primary audio</div>
<div class="t val" style="left:165.5px;top:287px;font-size:9.4px;letter-spacing:0.037px">Microphone</div>
<div class="t lbl" style="left:21px;top:309.5px;font-size:9.4px;letter-spacing:-0.125px">Backup audio:</div>
<div class="t lbl" style="left:21px;top:332.5px;font-size:9.4px;letter-spacing:-0.186px">File name</div>
<div class="t lbl" style="left:21px;top:355.5px;font-size:9.4px;letter-spacing:-0.018px">Line position:</div>
<div class="t val" style="left:165.5px;top:356px;font-size:9.4px;letter-spacing:-0.079px">2 rows: 1,2</div>
<svg class="a" style="left:160px;top:206px" width="423" height="37" viewBox="0 0 423 37"><rect x="2.55" y="2.55" width="415.90" height="29.90" rx="2.2" fill="#fff" stroke="#303030" stroke-width="1.1"/><path d="M417.40 26.40L412.40 31.40M417.40 29.00L415.00 31.40" stroke="#8a8a8a" stroke-width=".7"/></svg>
<svg class="a" style="left:160px;top:244px" width="423" height="37" viewBox="0 0 423 37"><rect x="2.55" y="2.55" width="415.90" height="29.90" rx="2.2" fill="#fff" stroke="#303030" stroke-width="1.1"/><path d="M417.40 26.40L412.40 31.40M417.40 29.00L415.00 31.40" stroke="#8a8a8a" stroke-width=".7"/></svg>
<div class="a ph" style="left:9.5px;top:387px;width:580.300px;height:29px"></div>
<svg class="a" style="left:15px;top:393.5px" width="22.300" height="18" viewBox="0 0 23 18" preserveAspectRatio="none"><path d="M6.300 16.300H3.600a2.500 2.500 0 0 1-2.500-2.500V3.600a2.500 2.500 0 0 1 2.500-2.500h15.800a2.500 2.500 0 0 1 2.500 2.500v10.200a2.500 2.500 0 0 1-2.500 2.500h-2.700" fill="none" stroke="#a8a8a8" stroke-width="1.100"/><path d="M7 16.300h9" stroke="#a8a8a8" stroke-width="1.100"/><circle cx="6.400" cy="6.400" r="2" fill="#4fb4e0"/><path d="M3.200 9.600h6.400a3.200 2.900 0 0 1-6.400 0z" fill="#4fb4e0"/><path d="M12.300 6.800h5.400M12.300 10.600h5.400" stroke="#e3a82a" stroke-width="1.300"/></svg>
<div class="t b" style="left:43px;top:397px;color:#fff;font-size:11px;letter-spacing:-0.17px">Task information</div>
<svg class="a" style="left:574.5px;top:400px" width="8" height="6" viewBox="0 0 8 6"><path d="M.8 4.800L4 1.400l3.200 3.400" stroke="#fff" stroke-width="1.200" fill="none"/></svg>
<div class="t lbl" style="left:21px;top:436px;font-size:9.4px;letter-spacing:-0.438px">Task:</div>
<div class="t val" style="left:166.4px;top:437px;font-size:9.4px;letter-spacing:-0.147px">Live broadcast captioning</div>
<div class="t lbl" style="left:21px;top:467px;font-size:9.4px;letter-spacing:-0.088px">Task speaker identification:</div>
<div class="t lbl" style="left:21px;top:504.5px;font-size:9.4px;letter-spacing:-0.257px">Task notes:</div>
<svg class="a" style="left:160px;top:455px" width="423" height="37" viewBox="0 0 423 37"><rect x="2.95" y="2.85" width="415.50" height="30.00" rx="2.2" fill="#fff" stroke="#303030" stroke-width="1.1"/><path d="M417.40 26.80L412.40 31.80M417.40 29.40L415.00 31.80" stroke="#8a8a8a" stroke-width=".7"/></svg>
<svg class="a" style="left:160px;top:493px" width="423" height="37" viewBox="0 0 423 37"><rect x="2.95" y="2.85" width="415.50" height="30.20" rx="2.2" fill="#fff" stroke="#303030" stroke-width="1.1"/><path d="M417.40 27.00L412.40 32.00M417.40 29.60L415.00 32.00" stroke="#8a8a8a" stroke-width=".7"/></svg>
<div class="a" style="left:8.5px;top:546px;width:582.300px;height:19px;background:#262524;border-radius:0 0 3px 3px"></div>
<svg class="a" style="left:5px;top:381px" width="590" height="168" viewBox="0 0 590 168"><rect x="4.350" y="3.850" width="581.300" height="159.900" fill="none" stroke="#1fa02d" stroke-width="3.500"/></svg>
<svg class="a" style="left:285px;top:354px" width="30" height="30" viewBox="0 0 30 30"><circle cx="14.700" cy="15.250" r="13.450" fill="#1fa02d"/><text x="14.400" y="23" text-anchor="middle" style="font-family:&quot;Liberation Sans&quot;,sans-serif" font-size="19.500" fill="#000">1</text><rect x="9" y="20.600" width="5.100" height="3.200" fill="#1fa02d"/><rect x="16.350" y="20.600" width="4.400" height="3.200" fill="#1fa02d"/></svg>
<div class="a" style="left:4.5px;top:583px;width:51.200px;height:21.500px;background:#2e2e2e;border-radius:2.500px"></div>
<svg class="a" style="left:10px;top:585.6px" width="16" height="16" viewBox="0 0 16 16"><circle cx="8.300" cy="7.800" r="6.700" fill="none" stroke="#e0463f" stroke-width="2"/><path d="M3.600 3.100l9.400 9.400" stroke="#e0463f" stroke-width="2"/></svg>
<div class="t " style="left:30.3px;top:588.6px;color:#fff;font-size:8.2px;letter-spacing:-0.348px">Close</div>
<div id="dcopy" class="a b" style="left:217.5px;top:598.5px;line-height:9px;color:#fff;font-size:6.5px;letter-spacing:-0.148px">Copyright © 2012 <span style="color:#8a8a8a;font-weight:normal">O<span style="color:#e3b21e">O</span><span style="color:#4fb0d8">O</span>NA.NET</span> ltd. All rights reserved.</div>
</div>
</body>
</html>
